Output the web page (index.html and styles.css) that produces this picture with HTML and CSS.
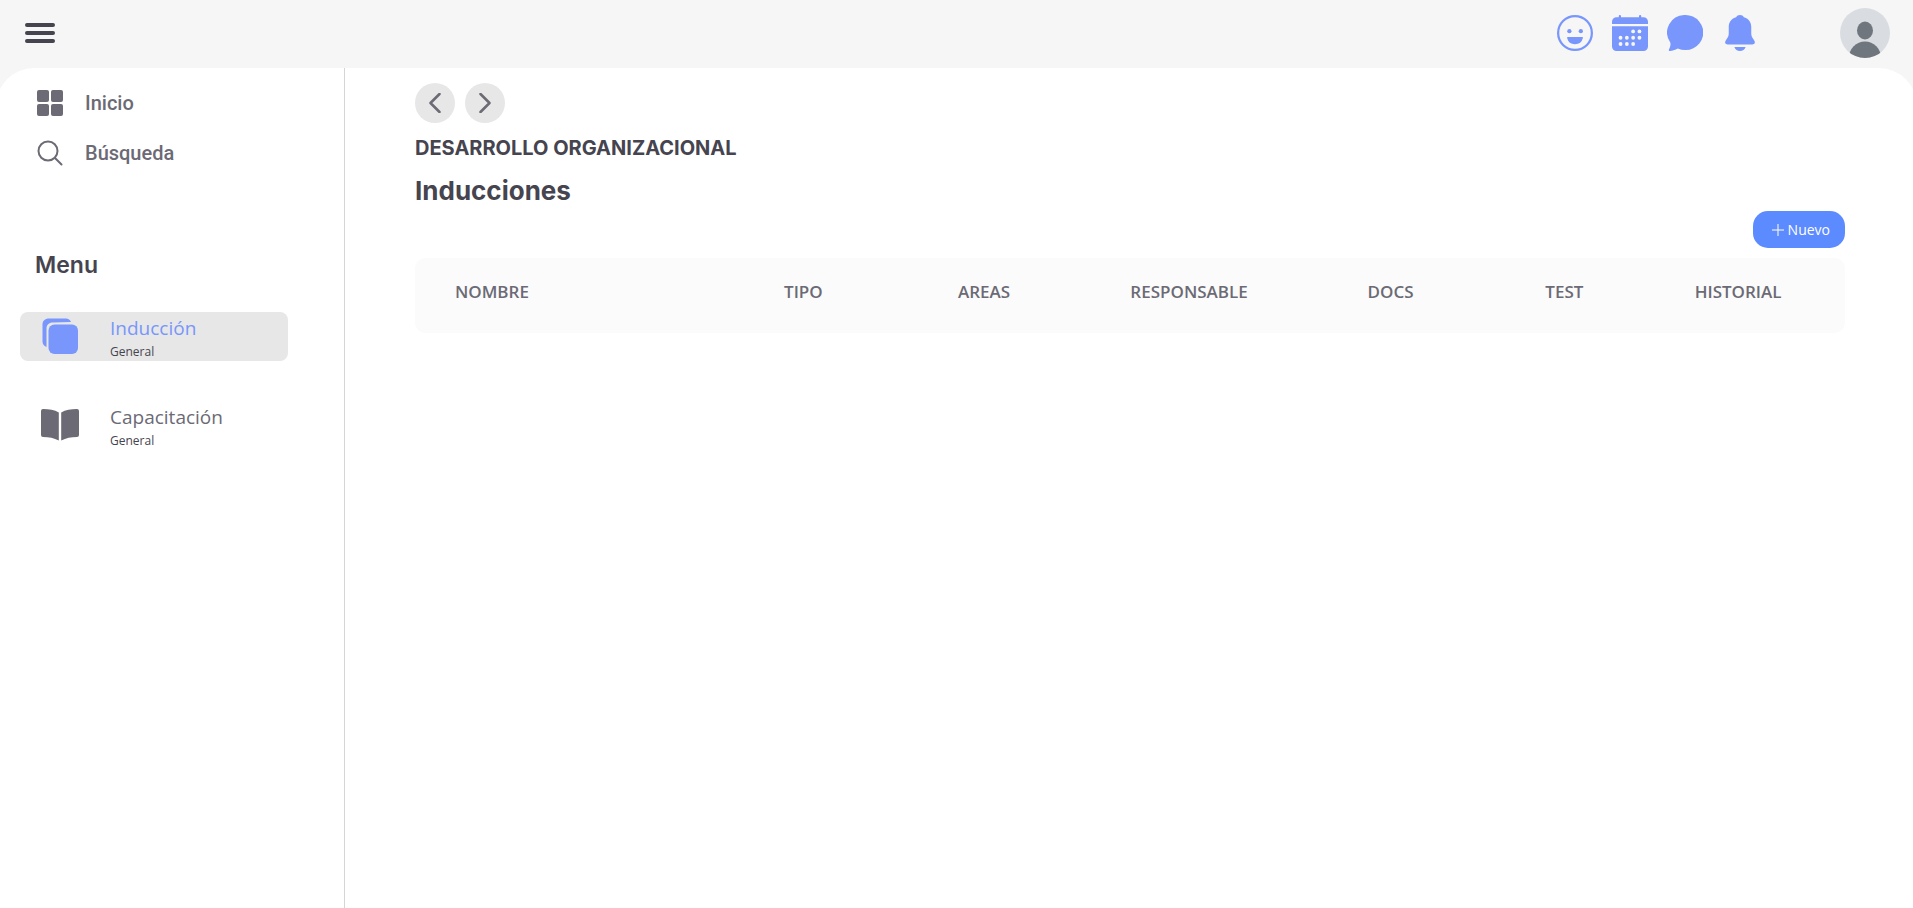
FILE: index.html
```
<!DOCTYPE html>
<html lang="es">
<head>
<meta charset="utf-8">
<meta name="viewport" content="width=device-width, initial-scale=1">
<title>Inducciones</title>
<link rel="stylesheet" href="styles.css">
</head>
<body>
<header class="topbar">
  <button class="icon-btn burger" aria-label="Abrir menú"><span></span><span></span><span></span></button>
  <div class="actions">
    <button class="icon-btn" aria-label="Estado de ánimo">
      <svg class="icon" viewBox="0 0 16 16"><path d="M8 15A7 7 0 1 1 8 1a7 7 0 0 1 0 14m0 1A8 8 0 1 0 8 0a8 8 0 0 0 0 16"/><path d="M4.750 9.800c-.2 0-.3.2-.25.4a3.600 3.600 0 0 0 7 0c.05-.2-.05-.4-.25-.4z"/><circle cx="5.500" cy="7.200" r=".95"/><circle cx="10.600" cy="7.200" r=".95"/></svg>
    </button>
    <button class="icon-btn" aria-label="Calendario">
      <svg class="icon" viewBox="0 0 16 16"><path d="M4 .5a.5.5 0 0 0-1 0V1H2a2 2 0 0 0-2 2v1h16V3a2 2 0 0 0-2-2h-1V.5a.5.5 0 0 0-1 0V1H4zM16 14V5H0v9a2 2 0 0 0 2 2h12a2 2 0 0 0 2-2"/><g class="dots"><circle cx="9.400" cy="7.300" r=".85"/><circle cx="12.200" cy="7.300" r=".85"/><circle cx="3.800" cy="10.100" r=".85"/><circle cx="6.600" cy="10.100" r=".85"/><circle cx="9.400" cy="10.100" r=".85"/><circle cx="12.200" cy="10.100" r=".85"/><circle cx="3.800" cy="12.900" r=".85"/><circle cx="6.600" cy="12.900" r=".85"/><circle cx="9.400" cy="12.900" r=".85"/></g></svg>
    </button>
    <button class="icon-btn" aria-label="Mensajes">
      <svg class="icon" viewBox="0 0 16 16"><path d="M8 0a8 7.800 0 1 1-3.200 14.900C3.600 15.500 2.300 15.900 1.300 16 .8 16 .7 15.600.9 15.200c.5-.9.8-2 .6-2.900A7.800 7.800 0 0 1 8 0z"/></svg>
    </button>
    <button class="icon-btn" aria-label="Notificaciones">
      <svg class="icon" viewBox="0 0 16 16"><path d="M8 0c-.8 0-1.400.4-1.700 1C4.300 1.500 3 3.200 3 5.300v2.900c0 1-.4 1.900-1.200 2.900-.4.600-.5 1-.3 1.500.1.300.5.500 1 .5h11c.5 0 .9-.2 1-.5.200-.5.100-.9-.3-1.500-.8-1-1.200-1.900-1.200-2.900V5.300c0-2.100-1.300-3.800-3.300-4.300C9.400.4 8.800 0 8 0zM5.500 14.200C5.900 15.300 6.800 16 8 16s2.100-.7 2.500-1.800z"/></svg>
    </button>
    <button class="icon-btn avatar" aria-label="Perfil">
      <svg viewBox="0 0 50 50"><defs><clipPath id="face"><circle cx="25" cy="25" r="25"/></clipPath></defs><g clip-path="url(#face)"><path fill="#d9dce0" d="M0 0h50v50H0z"/><ellipse cx="25" cy="22.500" rx="8" ry="9" fill="#6f767e"/><ellipse cx="25" cy="50" rx="16" ry="16.500" fill="#6f767e"/></g></svg>
    </button>
  </div>
</header>
<div class="panel">
  <aside class="sidebar">
    <nav class="shortcuts">
      <a href="#"><svg class="shortcut-icon" viewBox="0 0 26 26"><rect width="12" height="12" rx="2"/><rect x="14" width="12" height="12" rx="2"/><rect y="14" width="12" height="12" rx="2"/><rect x="14" y="14" width="12" height="12" rx="2"/></svg>Inicio</a>
      <a href="#"><svg class="shortcut-icon outline" viewBox="0 0 26 26"><circle cx="11" cy="11" r="9.500"/><path d="m18 18 6.500 6.500"/></svg>Búsqueda</a>
    </nav>
    <h2 class="menu-title">Menu</h2>
    <nav class="menu">
      <a class="menu-item active" href="#">
        <svg class="menu-icon" viewBox="0 1 40 40"><rect x="8.500" y="8.500" width="29.500" height="29.500" rx="6"/><path d="M31 6c-.8-2.300-2.800-3.500-5-3.500H9C5 2.500 2.500 5 2.500 8.500v17c0 2.500 1.400 4.600 4 5.500V12.500c0-3.500 2.500-6 6-6z"/></svg>
        <span class="menu-text"><span class="menu-name">Inducción</span><small>General</small></span>
      </a>
      <a class="menu-item" href="#">
        <svg class="menu-icon" viewBox="0 1 40 40"><path d="M18.800 7.500C14.500 4.700 9 4 3 4Q1 4 1 6v24q0 2 2 2c6 0 11 1 15.800 3.500zM21.200 7.500C25.500 4.700 31 4 37 4q2 0 2 2v24q0 2-2 2c-6 0-11 1-15.800 3.500z"/></svg>
        <span class="menu-text"><span class="menu-name">Capacitación</span><small>General</small></span>
      </a>
    </nav>
  </aside>
  <main class="content">
    <div class="history">
      <button class="round" aria-label="Atrás"><svg viewBox="0 0 20 20"><path d="m14.500 1-9 9 9 9"/></svg></button>
      <button class="round" aria-label="Adelante"><svg viewBox="0 0 20 20"><path d="m5.500 1 9 9-9 9"/></svg></button>
    </div>
    <p class="section">DESARROLLO ORGANIZACIONAL</p>
    <h1 class="title">Inducciones</h1>
    <button class="new"><svg viewBox="0 0 12 12"><path d="M6 0v12M0 6h12"/></svg>Nuevo</button>
    <table class="list">
      <thead><tr><th class="name">NOMBRE</th><th class="mid">TIPO</th><th class="mid">AREAS</th><th class="wide">RESPONSABLE</th><th>DOCS</th><th>TEST</th><th>HISTORIAL</th></tr></thead>
      <tbody></tbody>
    </table>
  </main>
</div>
</body>
</html>
```
FILE: styles.css
```
* { box-sizing: border-box; }
body {
  margin: 0;
  min-height: 100vh;
  display: flex;
  flex-direction: column;
  overflow-x: hidden;
  background: #f6f6f6;
  color: #45444f;
  font-family: "Open Sans", "Noto Sans", sans-serif;
}
button { border: 0; padding: 0; background: none; font: inherit; cursor: pointer; }
a { color: inherit; text-decoration: none; }
svg { display: block; }

.topbar {
  display: flex;
  align-items: center;
  justify-content: space-between;
  height: 68px;
  padding: 0 23px 2px 25px;
}
.burger { display: flex; flex-direction: column; gap: 4px; width: 30px; }
.burger span { height: 4px; border-radius: 2px; background: #45444f; }
.actions { display: flex; align-items: center; gap: 19px; }
.icon { width: 36px; height: 36px; fill: #7896fb; }
.dots { fill: #f6f6f6; }
.avatar { width: 50px; margin-left: 63px; }

.panel {
  flex: 1;
  display: flex;
  margin: 0 -4px;
  padding: 0 4px;
  background: #fff;
  border-radius: 38px 38px 0 0;
}
.sidebar {
  width: 345px;
  flex-shrink: 0;
  border-right: 1px solid #d5d5d5;
  padding: 10px 56px 0 20px;
}
.shortcuts a {
  display: flex;
  align-items: center;
  gap: 22px;
  height: 50px;
  padding-left: 17px;
  color: #6b6a75;
  font: 500 20px/24px Roboto, sans-serif;
}
.shortcut-icon { width: 26px; height: 26px; fill: #6b6a75; }
.outline { fill: none; stroke: #6b6a75; stroke-width: 2; stroke-linecap: round; }
.menu-title {
  margin: 70px 0 30px;
  padding-left: 15px;
  font: 600 23px/34px Inter, sans-serif;
}
.menu { display: flex; flex-direction: column; gap: 40px; }
.menu-item {
  display: flex;
  align-items: center;
  gap: 30px;
  height: 49px;
  padding-left: 20px;
  border-radius: 8px;
  color: #6b6a75;
}
.menu-icon { width: 40px; height: 40px; fill: currentColor; }
.menu-text { display: flex; flex-direction: column; }
.menu-name { font-size: 19px; line-height: 30px; }
.menu-text small { font-size: 12px; line-height: 18px; color: #45444f; }
.active { background: #e7e7e7; }
.active .menu-icon, .active .menu-name { fill: #7896fb; color: #7896fb; }

.content {
  flex: 1;
  display: flex;
  flex-direction: column;
  padding: 15px 68px 0 70px;
}
.history { display: flex; gap: 10px; }
.round {
  display: grid;
  place-items: center;
  width: 40px;
  height: 40px;
  border-radius: 50%;
  background: #e7e7e7;
}
.round svg {
  width: 20px;
  height: 20px;
  fill: none;
  stroke: #6b6a75;
  stroke-width: 2.5;
  stroke-linecap: round;
  stroke-linejoin: round;
}
.section { margin: 10px 0 0; font: 700 20px/30px Inter, sans-serif; }
.title { margin: 10px 0 2px; font: 700 26px/36px Inter, sans-serif; }
.new {
  align-self: flex-end;
  display: flex;
  align-items: center;
  gap: 4px;
  height: 37px;
  padding: 0 15px 0 19px;
  border-radius: 15px;
  background: #5c8aff;
  color: #fff;
  font-size: 14px;
}
.new svg { width: 12px; height: 12px; stroke: #fff; stroke-width: 1; overflow: visible; }
.list {
  width: 100%;
  margin-top: 10px;
  padding: 0 20px;
  table-layout: fixed;
  border-spacing: 0;
  border-radius: 10px;
  background: #fbfbfb;
}
.list th {
  width: 12.5%;
  padding: 21px 0 29px;
  color: #6b6a75;
  font-size: 17px;
  font-weight: 600;
  line-height: 25px;
}
.list .name { width: 20%; padding-left: 20px; text-align: left; }
.list .mid { width: 13%; }
.list .wide { width: 16.5%; }
```
